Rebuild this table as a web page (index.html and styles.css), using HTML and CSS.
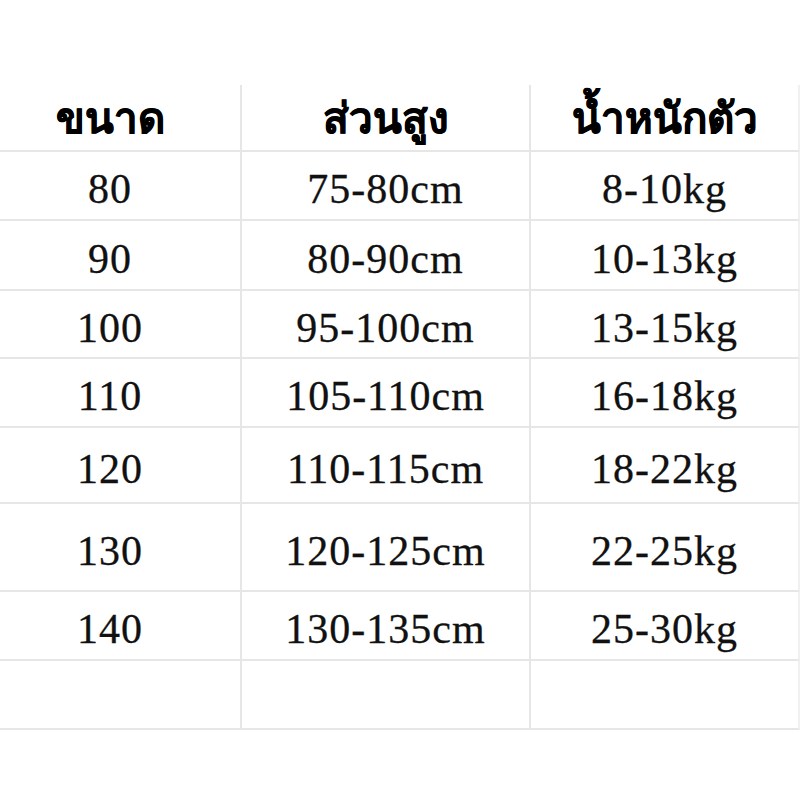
FILE: index.html
```html
<!DOCTYPE html>
<html lang="th">
<head>
<meta charset="utf-8">
<title>ตารางขนาด</title>
<link rel="stylesheet" href="styles.css">
</head>
<body>
<div class="page">
  <div class="chart">
    <div class="cell head">ขนาด</div>
    <div class="cell head">ส่วนสูง</div>
    <div class="cell head last">น้ำหนักตัว</div>

    <div class="cell">80</div>
    <div class="cell">75-80cm</div>
    <div class="cell last">8-10kg</div>

    <div class="cell">90</div>
    <div class="cell">80-90cm</div>
    <div class="cell last">10-13kg</div>

    <div class="cell">100</div>
    <div class="cell">95-100cm</div>
    <div class="cell last">13-15kg</div>

    <div class="cell">110</div>
    <div class="cell">105-110cm</div>
    <div class="cell last">16-18kg</div>

    <div class="cell">120</div>
    <div class="cell">110-115cm</div>
    <div class="cell last">18-22kg</div>

    <div class="cell">130</div>
    <div class="cell">120-125cm</div>
    <div class="cell last">22-25kg</div>

    <div class="cell">140</div>
    <div class="cell">130-135cm</div>
    <div class="cell last">25-30kg</div>

    <div class="cell"></div>
    <div class="cell"></div>
    <div class="cell last"></div>
  </div>
</div>
</body>
</html>
```
FILE: styles.css
```css
html, body {
  margin: 0;
  padding: 0;
  background: #ffffff;
}

.page {
  width: 800px;
  height: 800px;
  overflow: hidden;
  padding-top: 85px;
  box-sizing: border-box;
}

.chart {
  margin-left: -20px;
  width: 820px;
  display: grid;
  grid-template-columns: 262px 289px 269px;
  grid-template-rows: 67px 69px 70px 68px 69px 76px 88px 69px 69px;
}

.cell {
  display: flex;
  align-items: center;
  justify-content: center;
  border-bottom: 2px solid #e6e6e6;
  border-right: 2px solid #e6e6e6;
  box-sizing: border-box;
  font-family: "Liberation Serif", "Times New Roman", serif;
  font-size: 42px;
  letter-spacing: 1px;
  color: #111111;
  -webkit-text-stroke: 0.3px #111111;
  padding-top: 7px;
}

.cell.last {
  border-right: 2px solid #f0f0f0;
}

.cell.head {
  font-family: Tahoma, "DejaVu Sans", "Noto Sans", sans-serif;
  font-weight: bold;
  font-size: 42px;
  letter-spacing: 0;
  color: #000000;
  -webkit-text-stroke: 0.6px #000000;
  padding-top: 0;
}
```
